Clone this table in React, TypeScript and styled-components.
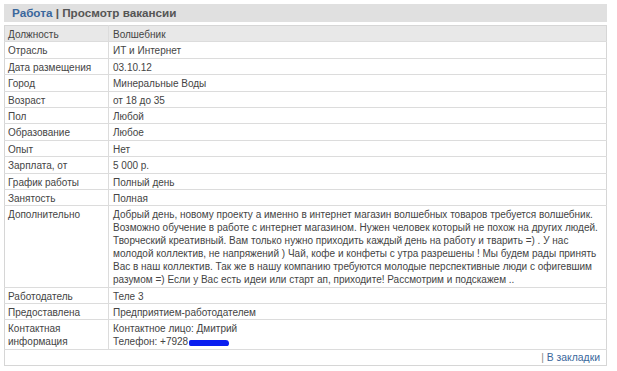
import React from 'react';
import styled, { createGlobalStyle } from 'styled-components';

const GlobalStyle = createGlobalStyle`
  body {
    margin: 0;
    background: #fff;
    font-family: "Liberation Sans", Arial, sans-serif;
  }
`;

const Page = styled.div`
  width: 603px;
  padding: 4px 0 0 4px;
`;

const TitleBar = styled.div`
  height: 18px;
  line-height: 18px;
  padding-left: 8px;
  background: #e0e0e0;
  font-size: 11.7px;
  font-weight: bold;
  color: #555;
`;

const Link = styled.a`
  color: #3a679c;
  text-decoration: none;
`;

const Table = styled.table`
  width: 603px;
  margin-top: 3px;
  table-layout: fixed;
  border-collapse: collapse;
  border: 1px solid #d6d6d6;
  font-size: 10px;
  color: #444;
`;

const Row = styled.tr<{ $head?: boolean }>`
  background: ${({ $head }) => ($head ? '#e8e8e8' : '#fff')};
`;

const Cell = styled.td`
  padding: 2px 4px 0.4px 4px;
  line-height: 13px;
  vertical-align: top;
  white-space: nowrap;
  overflow: hidden;
  border-bottom: 1px solid #dcdcdc;
`;

const Label = styled(Cell)`
  width: 95px;
  padding-left: 3px;
  border-right: 1px solid #dcdcdc;
`;

const Footer = styled.td`
  height: 15px;
  padding: 0 6px 0 4px;
  text-align: right;
  font-size: 10.4px;
  color: #888;
`;

const Scribble = styled.span`
  display: inline-block;
  width: 40px;
  height: 6px;
  margin-left: 1px;
  vertical-align: -1px;
  background: #0a1ef0;
  border-radius: 2px 4px 3px 2px;
`;

const rows: [React.ReactNode, React.ReactNode][] = [
  ['Отрасль', 'ИТ и Интернет'],
  ['Дата размещения', '03.10.12'],
  ['Город', 'Минеральные Воды'],
  ['Возраст', 'от 18 до 35'],
  ['Пол', 'Любой'],
  ['Образование', 'Любое'],
  ['Опыт', 'Нет'],
  ['Зарплата, от', '5 000 р.'],
  ['График работы', 'Полный день'],
  ['Занятость', 'Полная'],
  [
    'Дополнительно',
    <>
      Добрый день, новому проекту а именно в интернет магазин волшебных товаров требуется волшебник.
      <br />
      Возможно обучение в работе с интернет магазином. Нужен человек который не похож на других людей.
      <br />
      Творческий креативный. Вам только нужно приходить каждый день на работу и тварить =) . У нас
      <br />
      молодой коллектив, не напряжений ) Чай, кофе и конфеты с утра разрешены ! Мы будем рады принять
      <br />
      Вас в наш коллектив. Так же в нашу компанию требуются молодые перспективные люди с офигевшим
      <br />
      разумом =) Если у Вас есть идеи или старт ап, приходите! Рассмотрим и подскажем ..
    </>,
  ],
  ['Работодатель', 'Теле 3'],
  ['Предоставлена', 'Предприятием-работодателем'],
  [
    <>
      Контактная
      <br />
      информация
    </>,
    <>
      Контактное лицо: Дмитрий
      <br />
      Телефон: +7928
      <Scribble />
    </>,
  ],
];

export default function App() {
  return (
    <>
      <GlobalStyle />
      <Page>
        <TitleBar>
          <Link href="#">Работа</Link> | Просмотр вакансии
        </TitleBar>
        <Table>
          <colgroup>
            <col style={{ width: 104 }} />
            <col />
          </colgroup>
          <tbody>
            <Row $head>
              <Label>Должность</Label>
              <Cell>Волшебник</Cell>
            </Row>
            {rows.map(([label, value], i) => (
              <Row key={i}>
                <Label>{label}</Label>
                <Cell>{value}</Cell>
              </Row>
            ))}
            <tr>
              <Footer colSpan={2}>
                | <Link href="#">В закладки</Link>
              </Footer>
            </tr>
          </tbody>
        </Table>
      </Page>
    </>
  );
}
